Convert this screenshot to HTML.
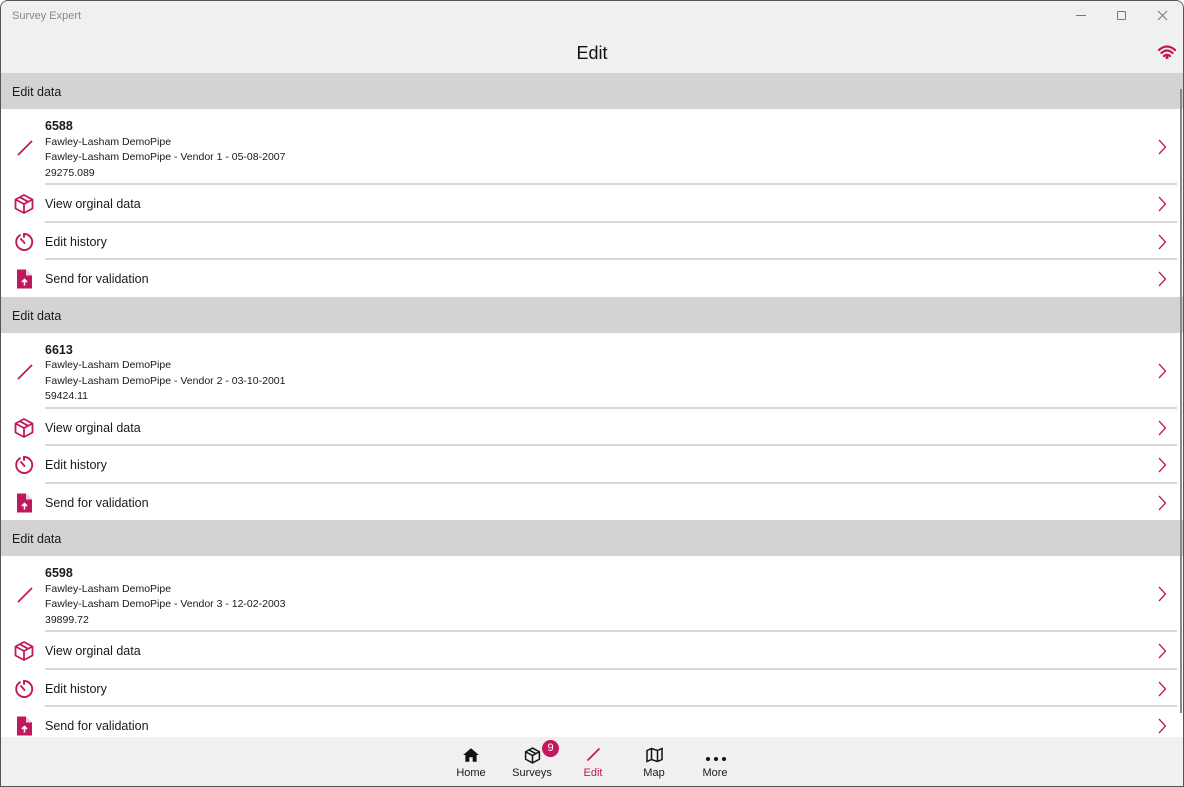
<!DOCTYPE html>
<html><head><style>
*{margin:0;padding:0;box-sizing:border-box}
body{width:1184px;height:787px;overflow:hidden;background:#fff;font-family:"Liberation Sans",sans-serif;color:#1a1a1a;position:relative}
.win{position:absolute;inset:0;border:1px solid #555;border-radius:8px 8px 0 0;overflow:hidden;background:#fff}
.tb{position:absolute;left:0;top:0;width:100%;height:72px;background:#f0f0f0}
.tt{position:absolute;left:11px;top:9px;font-size:11px;color:#888}
.h{position:absolute;left:0;width:100%;top:42px;text-align:center;font-size:18px;color:#111}
.sec{position:absolute;left:0;width:1184px;height:36px;background:#d3d3d3;font-size:12.5px;padding:12px 0 0 11px}
.row{position:absolute;left:0;width:1176px;height:37.5px}
.row .l{position:absolute;left:44px;top:12px;font-size:12.5px}
.sep{position:absolute;left:44px;right:0;bottom:0;height:2px;background:#d8d8d8}
.ic{position:absolute;left:12px;top:8px}
.chev{position:absolute;right:10px;top:11px}
.nav{position:absolute;left:0;top:736px;width:1184px;height:51px;background:#f0f0f0}
.ni{position:absolute;top:30px;font-size:11px;text-align:center;width:60px}
</style></head><body><div class="win">
<div class="tb"><div class="tt">Survey Expert</div>
<div style="position:absolute;left:1075px;top:14px;width:10px;height:1px;background:#777"></div>
<div style="position:absolute;left:1116px;top:10px;width:9px;height:9px;border:1px solid #777;border-radius:1px"></div>
<svg style="position:absolute;left:1156px;top:9px" width="11" height="11"><path d="M1 1L10 10M10 1L1 10" stroke="#777" stroke-width="1"/></svg>
<div class="h" style="top:42px">Edit</div>
<svg style="position:absolute;left:1157px;top:44px" width="18" height="14" viewBox="0 0 18 14"><path d="M1 5Q9 -2 17 5M3.5 8Q9 3 14.5 8M6 11Q9 8.5 12 11" stroke="#c2185b" stroke-width="2.2" fill="none" stroke-linecap="round"/><circle cx="9" cy="12.5" r="1.6" fill="#c2185b"/></svg>
</div>
<div id="c"></div>
<div style="position:absolute;left:1179px;top:88px;width:2px;height:624px;background:#888"></div>
<div class="nav">
<svg style="position:absolute;left:461px;top:10px" width="18" height="16" viewBox="0 0 16 14"><path d="M8 1L1 7H3V13H6.5V9H9.5V13H13V7H15Z" fill="#111"/></svg>
<div class="ni" style="left:440px">Home</div>
<svg style="position:absolute;left:523px;top:10px" width="17" height="17" viewBox="0 0 16 16" fill="none" stroke="#111" stroke-width="1.4"><path d="M8 1L14.5 4.5V11.5L8 15L1.5 11.5V4.5Z M1.5 4.5L8 8L14.5 4.5M8 8V15M4.8 2.8L11.2 6.3"/></svg>
<div style="position:absolute;left:541px;top:3px;width:17px;height:17px;border-radius:50%;background:#c2185b;color:#fff;font-size:11px;text-align:center;line-height:17px">9</div>
<div class="ni" style="left:501px">Surveys</div>
<svg style="position:absolute;left:585px;top:10px" width="15" height="15"><path d="M1.5 13.5L13.5 1.5" stroke="#c2185b" stroke-width="1.8"/></svg>
<div class="ni" style="left:562px;color:#c2185b">Edit</div>
<svg style="position:absolute;left:645px;top:10px" width="17" height="16" viewBox="0 0 17 15" fill="none" stroke="#111" stroke-width="1.5"><path d="M1 3L5.5 1L11.5 3L16 1V12L11.5 14L5.5 12L1 14Z M5.5 1V12M11.5 3V14"/></svg>
<div class="ni" style="left:623px">Map</div>
<div style="position:absolute;left:705px;top:20px;font-size:0">
<span style="display:inline-block;width:4px;height:4px;border-radius:50%;background:#111;margin-right:4px"></span><span style="display:inline-block;width:4px;height:4px;border-radius:50%;background:#111;margin-right:4px"></span><span style="display:inline-block;width:4px;height:4px;border-radius:50%;background:#111"></span></div>
<div class="ni" style="left:684px">More</div>
</div>
</div>
<script>
const data=[["6588","Fawley-Lasham DemoPipe - Vendor 1 - 05-08-2007","29275.089"],["6613","Fawley-Lasham DemoPipe - Vendor 2 - 03-10-2001","59424.11"],["6598","Fawley-Lasham DemoPipe - Vendor 3 - 12-02-2003","39899.72"]];
const C='#c2185b';
const chev=(t)=>`<svg class="chev" style="top:${t}px" width="10" height="16"><path d="M2 1L8.5 8L2 15" stroke="#c2185b" stroke-width="1.3" fill="none"/></svg>`;
const icons=[
`<svg class="ic" width="22" height="22" viewBox="0 0 22 22" fill="none" stroke="${C}" stroke-width="1.8" stroke-linejoin="round"><path d="M11 2L19.5 6.5V15.5L11 20L2.5 15.5V6.5Z M2.5 6.5L11 11L19.5 6.5M11 11V20M6.8 4.2L15.2 8.8"/></svg>`,
`<svg class="ic" width="22" height="22" viewBox="0 0 22 22" fill="none" stroke="${C}" stroke-width="1.9" stroke-linecap="round"><path d="M7 4.2A8 8 0 1 0 11 3"/><path d="M11 3V6M8 8L11.5 12"/></svg>`,
`<svg class="ic" width="22" height="22" viewBox="0 0 22 22"><path d="M4 1.5H13L19 7.5V20.5H4Z" fill="${C}"/><path d="M13 1.5V7.5H19" fill="#fff" opacity=".8"/><path d="M11.5 17.5V11.5M9 14L11.5 11.5L14 14" stroke="#fff" stroke-width="1.6" fill="none"/></svg>`];
const labels=["View orginal data","Edit history","Send for validation"];
let h='';
data.forEach((d,i)=>{const y=72+i*223.7;
h+=`<div class="sec" style="top:${y}px">Edit data</div>`;
h+=`<div class="row" style="top:${y+36}px;height:76px"><svg style="position:absolute;left:15px;top:30px" width="18" height="18"><path d="M2 16L16 2" stroke="${C}" stroke-width="1.8"/></svg>
<div style="position:absolute;left:44px;top:10px;line-height:14.5px"><b style="font-size:12.5px">${d[0]}</b><br><span style="font-size:10.5px">Fawley-Lasham DemoPipe<br>${d[1]}<br>${d[2]}</span></div>${chev(30)}<div class="sep"></div></div>`;
labels.forEach((l,j)=>{h+=`<div class="row" style="top:${y+112+j*37.5}px">${icons[j]}<div class="l">${l}</div>${chev(11)}${j<2?'<div class="sep"></div>':''}</div>`;});
});
document.getElementById('c').innerHTML=h;
</script>
</body></html>
